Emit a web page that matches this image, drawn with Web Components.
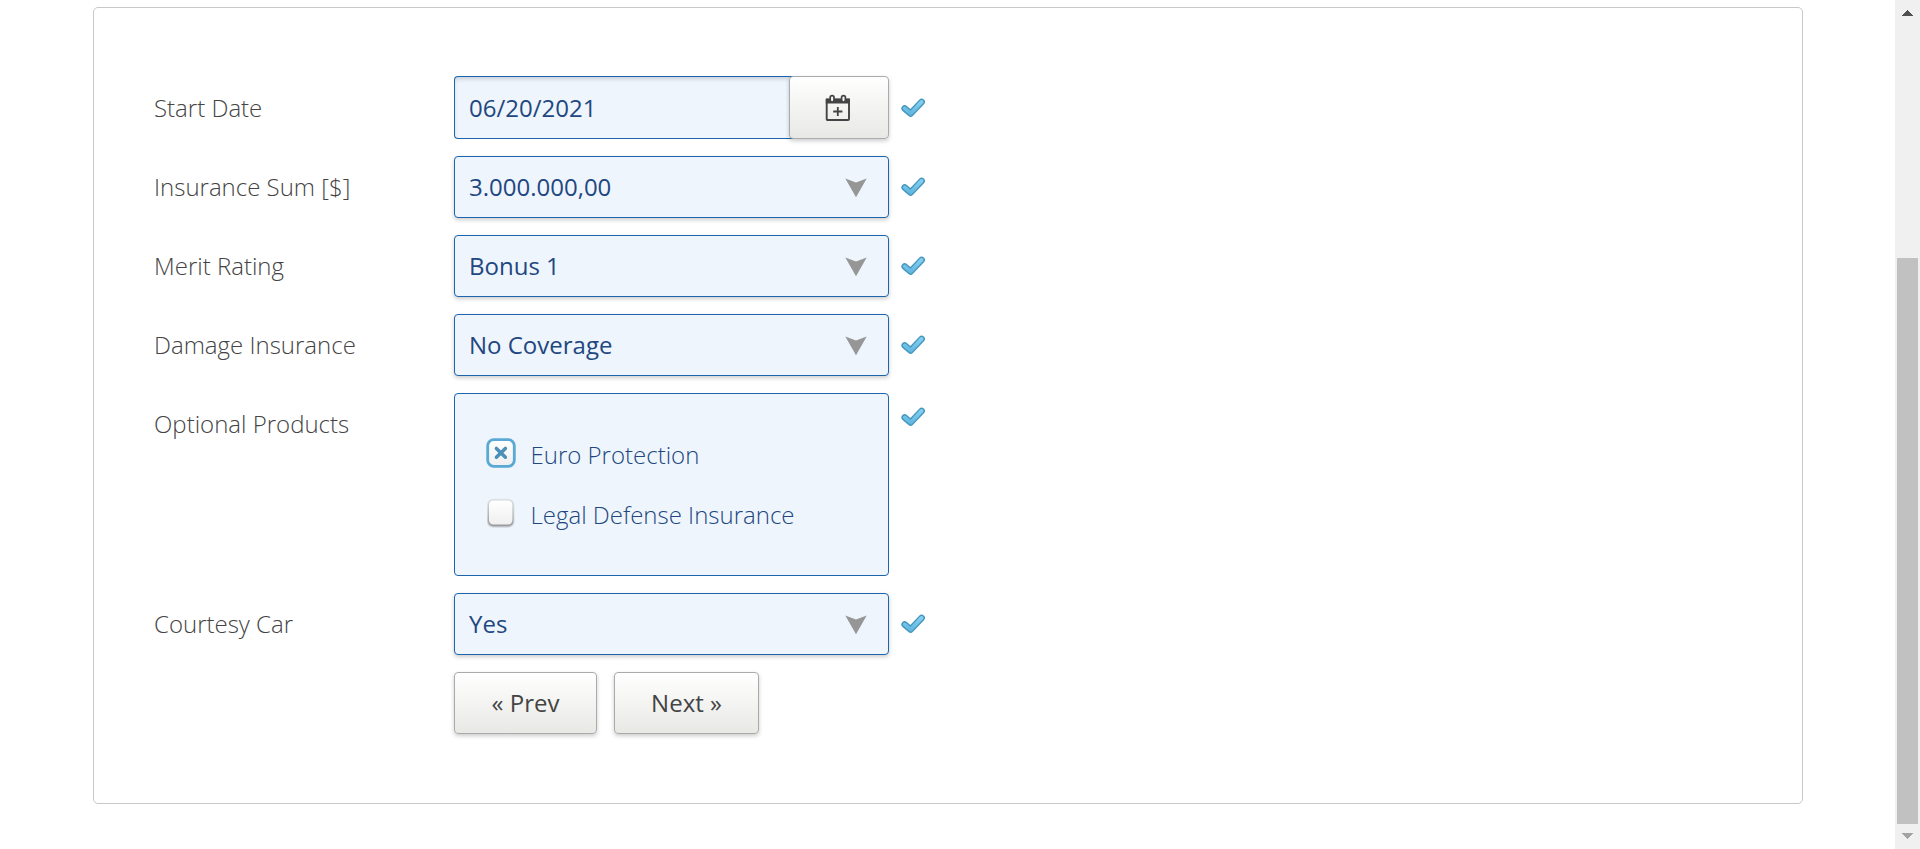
<!DOCTYPE html>
<html lang="en">
<head>
<meta charset="utf-8">
<title>Insurance form</title>
<style>
html, body { margin: 0; height: 100%; overflow: hidden; background: #fff; }
body { font-family: "Open Sans", sans-serif; font-size: 24px; color: #444; }
</style>
</head>
<body>
<app-page>
  <form-card>
    <form-row label="Start Date"><date-field>06/20/2021</date-field></form-row>
    <form-row label="Insurance Sum [$]"><select-field>3.000.000,00</select-field></form-row>
    <form-row label="Merit Rating"><select-field>Bonus 1</select-field></form-row>
    <form-row label="Damage Insurance"><select-field>No Coverage</select-field></form-row>
    <form-row label="Optional Products" top>
      <option-group>
        <check-option checked>Euro Protection</check-option>
        <check-option>Legal Defense Insurance</check-option>
      </option-group>
    </form-row>
    <form-row label="Courtesy Car"><select-field>Yes</select-field></form-row>
    <button-bar>
      <push-button style="width:143px">« Prev</push-button>
      <push-button style="width:145px">Next »</push-button>
    </button-bar>
  </form-card>
  <scroll-track slot="scroll"></scroll-track>
</app-page>
<script>
function define(name, html) {
  const template = document.createElement('template');
  template.innerHTML = html;
  customElements.define(name, class extends HTMLElement {
    constructor() {
      super();
      this.attachShadow({ mode: 'open' }).append(template.content.cloneNode(true));
    }
    connectedCallback() {
      const label = this.shadowRoot.querySelector('[data-label]');
      if (label) label.textContent = this.getAttribute('label');
    }
  });
}

define('app-page', `<style>
  :host { display: flex; height: 100vh; }
  main { flex: 1; padding: 7px 92px 0 93px; box-sizing: border-box; }
</style><main><slot></slot></main><slot name="scroll"></slot>`);

define('form-card', `<style>
  :host { display: flex; flex-direction: column; gap: 17px; box-sizing: border-box; height: 797px;
    padding: 68px 60px; border: 1px solid #c8c8c8; border-radius: 5px; }
</style><slot></slot>`);

define('form-row', `<style>
  :host { display: flex; align-items: flex-start; }
  label { width: 300px; line-height: 62px; height: 62px; font-weight: 300; white-space: nowrap; }
  :host(:first-child) label { line-height: 63px; }
  .field { width: 435px; display: flex; }
  valid-mark { margin: 21px 0 0 12px; }
  :host(:first-child) valid-mark { margin-top: 22px; }
  :host([top]) valid-mark { margin-top: 14px; }
</style><label data-label></label><div class="field"><slot></slot></div><valid-mark></valid-mark>`);

define('valid-mark', `<style>:host { display: block; width: 24px; height: 20px; } svg { display: block; }</style>
<svg width="24" height="20" viewBox="0 0 24 20" fill="none" stroke-linecap="round" stroke-linejoin="round">
  <defs><linearGradient id="g" gradientUnits="userSpaceOnUse" x1="0" y1="1" x2="0" y2="18"><stop offset="0" stop-color="#8ad4f3"/><stop offset="1" stop-color="#5cb3dc"/></linearGradient></defs>
  <path d="M3.7 10.4 9.6 15.6 20.6 3.9" stroke="#4596be" stroke-width="6.6"/>
  <path d="M3.7 10.4 9.6 15.6 20.6 3.9" stroke="url(#g)" stroke-width="3.8"/>
</svg>`);

define('select-field', `<style>
  :host { display: flex; flex: 1; justify-content: space-between; align-items: flex-start; box-sizing: border-box; height: 62px;
    padding: 0 21px 0 14px; line-height: 60px; color: #224780; background: #eef5fd;
    border: 1px solid #1d64ad; border-radius: 4px; box-shadow: 0 2px 4px rgba(0,0,0,.2); }
  svg { margin-top: 21px; }
</style><span><slot></slot></span>
<svg width="22" height="20" viewBox="0 0 22 20"><path d="M.3.4 11 4.5 21.7.4 11 19.3Z" fill="#969696"/></svg>`);

define('date-field', `<style>
  :host { display: flex; flex: 1; height: 63px; }
  .input { width: 339px; box-sizing: border-box; padding-left: 14px; line-height: 61px; color: #224780; background: #eef5fd;
    border: 1px solid #1d64ad; border-right: 0; border-radius: 4px 0 0 4px; box-shadow: inset 0 3px 4px -1px rgba(0,0,0,.16); }
  .button { width: 100px; margin-left: -4px; box-sizing: border-box; display: flex; align-items: flex-start; justify-content: center;
    padding: 17px 2px 0 0; border: 1px solid #a9abae; border-radius: 4px; background: linear-gradient(#fff, #e8e8e5);
    box-shadow: 0 2px 4px rgba(0,0,0,.2); }
</style><div class="input"><slot></slot></div><div class="button">
<svg width="26" height="28" viewBox="0 0 26 28" fill="none">
  <path d="M1.7 5.5h22.3V25q0 1-1 1H2.7q-1 0-1-1Z" stroke="#444" stroke-width="1.9"/>
  <path d="M.8 9.5V5.7q0-1 1-1h22.2q1 0 1 1V9.5Z" fill="#444"/>
  <rect x="5.2" y="1.6" width="3.8" height="6.4" rx="1.9" fill="#f8f8f7" stroke="#444" stroke-width="1.7"/>
  <rect x="16.6" y="1.6" width="3.8" height="6.4" rx="1.9" fill="#f8f8f7" stroke="#444" stroke-width="1.7"/>
  <path d="M8.2 17.5h9.2M12.8 13v9" stroke="#444" stroke-width="1.8"/>
</svg></div>`);

define('option-group', `<style>
  :host { display: flex; flex: 1; flex-direction: column; box-sizing: border-box; height: 183px; padding: 30px 31px;
    background: #eef5fd; border: 1px solid #1d64ad; border-radius: 4px; color: #224780; }
</style><slot></slot>`);

define('check-option', `<style>
  :host { display: flex; height: 60px; font-weight: 300; line-height: 61px; gap: 14.5px; white-space: nowrap; }
  svg { display: none; margin-top: 14px; }
  :host([checked]) .on, :host(:not([checked])) .off { display: block; }
</style>
<svg class="on" width="30" height="30" viewBox="0 0 30 30"><defs><linearGradient id="face-on" x2="0" y2="1"><stop stop-color="#fff"/><stop offset="1" stop-color="#efefef"/></linearGradient></defs>
  <rect x="1.7" y="1.7" width="26.6" height="26.6" rx="6" fill="url(#face-on)" stroke="#58a9d3" stroke-width="2.8"/>
  <path d="M10.4 10.4 19.4 19.2M19.4 10.4 10.4 19.2" stroke="#4a90b8" stroke-width="3.5" stroke-linecap="round"/></svg>
<svg class="off" width="30" height="30" viewBox="0 0 30 30"><defs><linearGradient id="face-off" x1="0" y1="0" x2="0" y2="1"><stop offset="0" stop-color="#fff"/><stop offset="1" stop-color="#efefef"/></linearGradient>
  <linearGradient id="edge" x1="0" y1="0" x2="0" y2="1"><stop offset="0" stop-color="#d6d9dc"/><stop offset="1" stop-color="#98999b"/></linearGradient></defs>
  <rect x="1" y=".8" width="27.4" height="28.6" rx="6" fill="url(#edge)" opacity=".45"/>
  <rect x="1.9" y="1.6" width="25.6" height="26.6" rx="5.4" fill="url(#edge)"/>
  <rect x="3" y="2.6" width="23.4" height="23.8" rx="4.2" fill="url(#face-off)"/></svg>
<span><slot></slot></span>`);

define('button-bar', `<style>:host { display: flex; gap: 17px; margin-left: 300px; }</style><slot></slot>`);

define('push-button', `<style>
  :host { display: block; box-sizing: border-box; height: 62px; line-height: 60px; text-align: center; color: #444;
    border: 1px solid #aaa; border-radius: 4px; background: linear-gradient(#fff, #e8e8e5); box-shadow: 0 2px 4px rgba(0,0,0,.2); }
</style><slot></slot>`);

define('scroll-track', `<style>
  :host { display: flex; flex-direction: column; align-items: center; box-sizing: border-box; width: 25px; height: 849px; background: #f0f0f0; padding: 10px 0; }
  .thumb { width: 21px; height: 566px; margin: 242px 0 9px; background: #c1c1c1; }
  svg { display: block; }
</style>
<svg width="11" height="6" shape-rendering="crispEdges"><path d="M5.5 0 11 6H0Z" fill="#505050"/></svg>
<div class="thumb"></div>
<svg width="11" height="6" shape-rendering="crispEdges"><path d="M0 0H11L5.5 6Z" fill="#a3a3a3"/></svg>`);
</script>
</body>
</html>
